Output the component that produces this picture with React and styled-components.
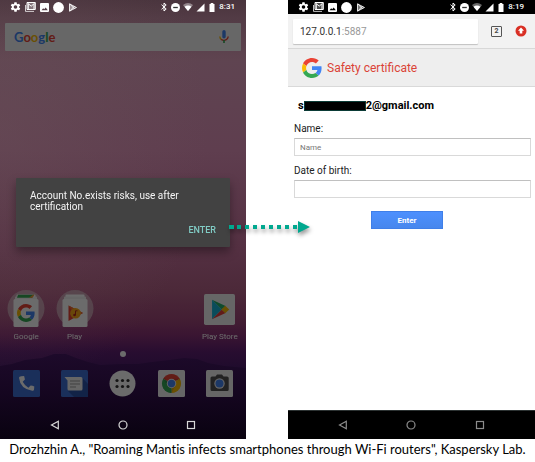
import React from "react";
import styled, { createGlobalStyle } from "styled-components";

const GlobalStyle = createGlobalStyle`
  *, *::before, *::after { box-sizing: border-box; }
  body { margin: 0; background: #fff; font-family: Roboto, sans-serif; }
  svg { display: block; flex: none; }
`;

const Figure = styled.figure`
  margin: 0;
  display: flex;
  flex-direction: column;
`;

const Phones = styled.div`
  display: grid;
  grid-template-columns: 246fr 42fr 247fr;
  min-height: 439px;
`;

const Caption = styled.figcaption`
  padding-top: 1px;
  text-align: center;
  font: 13px/18px Lato, sans-serif;
  font-variant-ligatures: none;
  color: #000;
`;

const Phone = styled.section`
  position: relative;
  display: flex;
  flex-direction: column;
  background: #fff;
`;

const HomePhone = styled(Phone)`
  background:
    radial-gradient(ellipse at 0% 30%, rgba(108, 84, 90, 0.35), transparent 60%),
    linear-gradient(
      #49343d 0, #523b45 18px, #5f4450 60px, #62455300 61px
    ),
    linear-gradient(
      #5f4450 0, #5f4451 60px, #5f3e4f 150px, #543042 250px, #4c2939 290px,
      #431e33 320px, #3a1532 335px, #280d30 352px, #1e0b2c 370px, #12041c 390px
    );
`;

const Ridge = styled.svg`
  position: absolute;
  left: 0;
  bottom: 0;
  width: 100%;
  height: 88px;
`;

const Status = styled.header`
  position: relative;
  display: flex;
  align-items: center;
  justify-content: space-between;
  height: 14px;
  padding: 0 11px 0 10px;
  color: #fff;
  background: ${(p) => (p.$solid ? "#000" : "transparent")};
`;

const IconRun = styled.div`
  display: flex;
  align-items: center;
  gap: 3px;
`;

const Clock = styled.time`
  font-size: 8px;
  line-height: 14px;
  font-weight: 500;
`;

const Launcher = styled.div`
  position: relative;
  flex: 1;
  display: flex;
  flex-direction: column;
  filter: brightness(0.42);
`;

const SearchBar = styled.button`
  display: flex;
  align-items: center;
  justify-content: space-between;
  height: 28px;
  margin: 9px 5px 0;
  padding: 0 12px 0 9px;
  border: 0;
  border-radius: 1px;
  background: #f6f6f6;
`;

const Wordmark = styled.span`
  font: 700 13px/20px Lato, sans-serif;
`;

const Letter = styled.span`
  color: ${(p) => p.$color};
`;

const AppRow = styled.div`
  display: grid;
  grid-template-columns: repeat(5, 1fr);
  padding: 0 2px;
  margin-top: ${(p) => (p.$push ? "auto" : "0")};
`;

const AppButton = styled.button`
  display: flex;
  flex-direction: column;
  align-items: center;
  padding: 0;
  border: 0;
  background: none;
  color: #fff;
  font: 8px/12px Roboto, sans-serif;
  white-space: nowrap;
  grid-column: ${(p) => p.$column || "auto"};
`;

const AppArt = styled.span`
  display: flex;
  align-items: center;
  height: 44px;
`;

const PageDot = styled.span`
  align-self: center;
  width: 6px;
  height: 6px;
  margin: 8px 0 13px;
  border-radius: 50%;
  background: #fff;
`;

const Dock = styled(AppRow)`
  padding-bottom: 13px;
`;

const NavBar = styled.nav`
  position: relative;
  display: grid;
  grid-template-columns: repeat(3, 1fr);
  height: 29px;
  padding: 0 21px;
  color: ${(p) => (p.$solid ? "#8c8c8c" : "#d8d8d8")};
  background: ${(p) => (p.$solid ? "#000" : "transparent")};
  border-top: ${(p) => (p.$solid ? "1px solid #2c3232" : "0")};
`;

const NavButton = styled.button`
  display: flex;
  align-items: center;
  justify-content: center;
  padding: 0;
  border: 0;
  background: none;
  color: inherit;
`;

const Dialog = styled.div`
  position: absolute;
  top: 178px;
  left: 16px;
  right: 16px;
  display: flex;
  flex-direction: column;
  padding: 12px 10px 9px 14px;
  border-radius: 1px;
  background: #424242;
  box-shadow: 0 5px 10px rgba(0, 0, 0, 0.35);
`;

const DialogText = styled.p`
  margin: 0;
  color: #f4f4f4;
  font-size: 10px;
  line-height: 11px;
`;

const DialogAction = styled.button`
  align-self: flex-end;
  margin-top: 10px;
  padding: 0 4px;
  border: 0;
  background: none;
  color: #80cbc4;
  font: 500 9px/16px Roboto, sans-serif;
`;

const Gap = styled.div`
  position: relative;
  z-index: 1;
`;

const Arrow = styled.svg`
  position: absolute;
  top: 220px;
  left: -17px;
  filter: drop-shadow(1px 3px 2px rgba(0, 0, 0, 0.4));
`;

const BrowserBar = styled.div`
  display: flex;
  align-items: center;
  gap: 13px;
  height: 35px;
  padding: 0 8px 0 5px;
  background: #f2f2f2;
  border-bottom: 1px solid #d8d8d8;
`;

const Url = styled.button`
  flex: 1;
  height: 25px;
  padding: 0 7px;
  border: 0;
  border-radius: 1px;
  background: #fff;
  box-shadow: 0 1px 1px rgba(0, 0, 0, 0.2);
  color: #333;
  font: 10px/25px Roboto, sans-serif;
  text-align: left;
`;

const Port = styled.span`
  color: #999;
`;

const BarButton = styled.button`
  display: flex;
  padding: 0;
  border: 0;
  background: none;
`;

const TabCount = styled(BarButton)`
  align-items: center;
  justify-content: center;
  width: 11px;
  height: 11px;
  border: 1px solid #555;
  border-radius: 1px;
  color: #444;
  font: 700 7px/9px Roboto, sans-serif;
`;

const SiteHeader = styled.div`
  display: flex;
  align-items: center;
  gap: 5px;
  height: 38px;
  padding: 0 14px;
  background: #eee;
  border-bottom: 1px solid #d9d9d9;
`;

const SiteTitle = styled.h1`
  margin: 0;
  color: #db4437;
  font: 400 12px/16px Roboto, sans-serif;
`;

const Form = styled.form`
  flex: 1;
  display: flex;
  flex-direction: column;
  padding: 12px 4px 0 6px;
`;

const Email = styled.h2`
  display: flex;
  align-items: center;
  margin: 0 0 8px 4px;
  color: #000;
  font: 700 11px/14px Roboto, sans-serif;
`;

const Redaction = styled.span`
  width: 62px;
  height: 10px;
  background: #000;
  border: 1px solid #0b3b36;
`;

const Label = styled.label`
  color: #222;
  font-size: 10px;
  line-height: 16px;
`;

const TextBox = styled.input`
  width: 100%;
  height: 18px;
  margin: 1px 0 7px;
  padding: 0 5px;
  border: 1px solid #d9d9d9;
  border-top-color: #c0c0c0;
  background: #fff;
  color: #333;
  font: 8px/16px Roboto, sans-serif;
  &::placeholder { color: #777; }
`;

const Submit = styled.button`
  align-self: center;
  width: 72px;
  height: 18px;
  margin: 6px 11px 0 0;
  border: 1px solid #3f7fe8;
  background: linear-gradient(#4d90fe, #4787ed);
  color: #fff;
  font: 700 8px/16px Roboto, sans-serif;
`;

const GoogleG = ({ size }) => (
  <svg width={size} height={size} viewBox="0 0 48 48">
    <path fill="#EA4335" d="M24 9.5c3.54 0 6.71 1.22 9.21 3.6l6.85-6.85C35.9 2.38 30.47 0 24 0 14.62 0 6.51 5.38 2.56 13.22l7.98 6.19C12.43 13.72 17.74 9.5 24 9.5z" />
    <path fill="#4285F4" d="M46.98 24.55c0-1.57-.15-3.09-.38-4.55H24v9.02h12.94c-.58 2.96-2.26 5.48-4.78 7.18l7.73 6c4.51-4.18 7.09-10.36 7.09-17.65z" />
    <path fill="#FBBC05" d="M10.53 28.59c-.48-1.45-.76-2.99-.76-4.59s.27-3.14.76-4.59l-7.98-6.19C.92 16.46 0 20.12 0 24c0 3.88.92 7.54 2.56 10.78l7.97-6.19z" />
    <path fill="#34A853" d="M24 48c6.48 0 11.93-2.13 15.89-5.81l-7.73-6c-2.15 1.45-4.92 2.3-8.16 2.3-6.26 0-11.57-4.22-13.47-9.91l-7.98 6.19C6.51 42.62 14.62 48 24 48z" />
  </svg>
);

function StatusBar({ time, solid }) {
  return (
    <Status $solid={solid}>
      <IconRun>
        <svg width="11" height="10" viewBox="1 2 22 20" fill="currentColor">
          <path d="M19.14 12.94a7 7 0 0 0 .06-.94 7 7 0 0 0-.07-.94l2.03-1.58a.5.5 0 0 0 .12-.61l-1.92-3.32a.49.49 0 0 0-.59-.22l-2.39.96a7 7 0 0 0-1.62-.94l-.36-2.54A.48.48 0 0 0 13.92 2.4h-3.84a.47.47 0 0 0-.47.41l-.36 2.54a7.3 7.3 0 0 0-1.62.94l-2.39-.96a.48.48 0 0 0-.59.22L2.74 8.87a.47.47 0 0 0 .12.61l2.03 1.58a7 7 0 0 0 0 1.88l-2.03 1.58a.5.5 0 0 0-.12.61l1.92 3.32c.12.22.37.29.59.22l2.39-.96c.5.38 1.03.7 1.62.94l.36 2.54c.05.24.24.41.48.41h3.84c.24 0 .44-.17.47-.41l.36-2.54a7 7 0 0 0 1.62-.94l2.39.96c.22.08.47 0 .59-.22l1.92-3.32a.48.48 0 0 0-.12-.61zM12 15.6a3.6 3.6 0 1 1 0-7.2 3.6 3.6 0 0 1 0 7.2z" />
        </svg>
        <svg width="12" height="10" viewBox="0 0 12 10" fill="none" stroke="currentColor">
          <path d="M1.5 3v6.4H10" strokeOpacity=".75" />
          <path d="M3 .5h8.3v7H3z" fill="currentColor" fillOpacity=".3" />
          <path d="M3.5 1l3.7 3.2L10.8 1M4.3 7V2M10 7V2" />
        </svg>
        <svg width="11" height="9" viewBox="0 0 11 9" fill="currentColor">
          <path fillRule="evenodd" d="M2 0h7a1 1 0 0 1 1 1v7a1 1 0 0 1-1 1H2a1 1 0 0 1-1-1V1a1 1 0 0 1 1-1zM2.5 7.2h6.3L6.7 4.4 5.2 6.2 4.2 5.2z" />
        </svg>
        <svg width="11" height="11" viewBox="0 0 11 11" fill="currentColor"><circle cx="5.5" cy="5.5" r="5.4" /></svg>
        <svg width="12" height="9" viewBox="0 0 12 9" fill="currentColor">
          <path fillOpacity=".45" d="M2 .5v8l7.500-4z" />
          <path fill="none" stroke="currentColor" strokeWidth=".8" d="M2.500.8v7.400L9.500 4.500zM3 1l4.500 5M3 8l4.500-5" />
        </svg>
      </IconRun>
      <IconRun>
        <svg width="8" height="10" viewBox="0 0 8 10" fill="none" stroke="currentColor">
          <path d="M1.5 2.700l4.700 4.300L4 9V1l2.200 2L1.500 7.300" />
        </svg>
        <svg width="9" height="9" viewBox="0 0 9 9"><circle cx="4.500" cy="4.500" r="4.500" fill="currentColor" /><path d="M2.200 4.500h4.600" stroke="#333" strokeWidth="1.300" /></svg>
        <svg width="10" height="8" viewBox="0 0 10 8" fill="currentColor">
          <path opacity=".4" d="M5 8L0 2q5-4 10 0z" /><path d="M5 8L1.500 3.700q3.500-2.600 7 0z" />
        </svg>
        <svg width="9" height="9" viewBox="0 0 9 9" fill="currentColor"><path d="M8.500.5v8H.5z" /></svg>
        <svg width="8" height="9" viewBox="0 0 8 9" fill="currentColor"><path d="M2.700 0h2.600v1h1.200v8h-5V1h1.200z" /></svg>
        <Clock>{time}</Clock>
      </IconRun>
    </Status>
  );
}

function Navigation({ solid }) {
  return (
    <NavBar $solid={solid}>
      <NavButton aria-label="Back">
        <svg width="10" height="10" viewBox="0 0 10 10" fill="none" stroke="currentColor" strokeWidth="1.200"><path d="M8.300 1.200v7.600L1.500 5z" /></svg>
      </NavButton>
      <NavButton aria-label="Home">
        <svg width="10" height="10" viewBox="0 0 10 10" fill="none" stroke="currentColor" strokeWidth="1.200"><circle cx="5" cy="5" r="4" /></svg>
      </NavButton>
      <NavButton aria-label="Overview">
        <svg width="10" height="10" viewBox="0 0 10 10" fill="none" stroke="currentColor" strokeWidth="1.200"><rect x="1.500" y="1.500" width="7" height="7" /></svg>
      </NavButton>
    </NavBar>
  );
}

const Folder = ({ children }) => (
  <svg width="38" height="38" viewBox="0 0 38 38">
    <circle cx="19" cy="18.500" r="18.500" fill="#d9b9c6" fillOpacity=".75" />
    <rect x="9.500" y="4.500" width="19" height="18" rx="1" fill="#fff" />
    <rect x="8" y="6.500" width="22" height="18" rx="1" fill="#f4f4f4" />
    <rect x="6.500" y="9" width="25" height="28" rx="1.500" fill="#fff" />
    {children}
  </svg>
);

const Tile = ({ size = 27, color = "#f4f4f4", children }) => (
  <svg width={size} height={size} viewBox="0 0 27 27">
    <rect width="27" height="27" rx="1.500" fill={color} />
    {children}
  </svg>
);

const GOOGLE = [["G", "#4285f4"], ["o", "#ea4335"], ["o", "#fbbc05"], ["g", "#4285f4"], ["l", "#34a853"], ["e", "#ea4335"]];

function HomeScreen() {
  return (
    <HomePhone>
      <Ridge viewBox="0 0 246 88" preserveAspectRatio="none">
        <defs>
          <linearGradient id="ground" x1="0" y1="0" x2="0" y2="1">
            <stop offset="0" stopColor="#1d0a2a" />
            <stop offset=".45" stopColor="#150620" />
            <stop offset="1" stopColor="#090210" />
          </linearGradient>
        </defs>
        <path fill="url(#ground)" d="M0 15L12 13 25 9 42 7 54 3 66 3 76 7 88 11 100 14 122 13 138 13 152 11 170 9 184 7 197 8 208 12 224 15 246 17V88H0z" />
      </Ridge>
      <StatusBar time="8:31" />
      <Launcher>
        <SearchBar aria-label="Google search">
          <Wordmark>{GOOGLE.map(([c, color], i) => <Letter key={i} $color={color}>{c}</Letter>)}</Wordmark>
          <svg width="10" height="14" viewBox="0 0 10 14" fill="none">
            <rect x="3.300" y="0" width="3.400" height="8.500" rx="1.700" fill="#4285f4" />
            <path d="M.8 6.500q.2 2 1.500 3" stroke="#fbbc05" strokeWidth="1.400" />
            <path d="M2.200 9.400q2.800 2 5.400 0Q9 8.400 9.200 6.500" stroke="#ea4335" strokeWidth="1.400" />
            <path d="M5 10v3" stroke="#34a853" strokeWidth="1.600" />
          </svg>
        </SearchBar>
        <AppRow $push>
          <AppButton>
            <AppArt>
              <Folder>
                <path d="M11 4.700h16l-2 3H10z" fill="#34a853" /><path d="M22 7.700l4-3h1.500l-2 3z" fill="#f29b38" />
                <svg x="10" y="14" width="18" height="18"><GoogleG size={18} /></svg>
              </Folder>
            </AppArt>
            Google
          </AppButton>
          <AppButton>
            <AppArt>
              <Folder>
                <path d="M12.500 15.500v15.500L27 23z" fill="#ea4335" />
                <path d="M12.500 15.500L27 23l-7 3z" fill="#f4702f" />
                <circle cx="19.500" cy="23.200" r="5.300" fill="#fba919" />
                <path d="M19.500 25.200v-4.400h2" stroke="#b3261e" fill="none" /><circle cx="18.500" cy="25" r="1.300" fill="#b3261e" />
              </Folder>
            </AppArt>
            Play
          </AppButton>
          <AppButton $column="5">
            <AppArt>
              <Tile size={31}>
                <path d="M7 5v17l8.500-8.500z" fill="#18b5d8" />
                <path d="M7 5l8.500 8.500 3.300-3z" fill="#23b26b" />
                <path d="M7 22l8.500-8.500 3.300 3z" fill="#e8413c" />
                <path d="M18.500 10.300l3.500 3.200-3.500 3.200-3.300-3.200z" fill="#fbbc05" />
              </Tile>
            </AppArt>
            Play Store
          </AppButton>
        </AppRow>
        <PageDot />
        <Dock>
          <AppButton aria-label="Phone">
            <Tile color="#3d70d6">
              <path fill="#fff" d="M8.200 6.200l2.900-.3q.6 2 .8 3.700L9.700 11.800q2.100 4 5.700 5.900l2.200-2.100q1.900.2 3.700.9l-.3 3.300q-.2 1.300-1.800 1Q7.200 18.800 6 7.700 6 6.300 8.200 6.200z" />
            </Tile>
          </AppButton>
          <AppButton aria-label="Messages">
            <Tile color="#3d70d6">
              <path d="M21.500 8L27 14v13H13l-6-6z" fill="#2c54a8" />
              <path d="M3.500 7h16.500q1.500 0 1.500 1.500v10.500q0 1.500-1.500 1.500H8q-1.500 0-1.500-1.500V10.500z" fill="#f4f4f4" />
              <path d="M9 11h10M9 14h10M9 17h6" stroke="#999" />
            </Tile>
          </AppButton>
          <AppButton aria-label="All apps">
            <svg width="27" height="27" viewBox="0 0 27 27">
              <circle cx="13.500" cy="13.500" r="13" fill="#fff" />
              {[8, 13.5, 19].map((x) => [10.5, 16.5].map((y) => <circle key={`${x}-${y}`} cx={x} cy={y} r="1.600" fill="#333" />))}
            </svg>
          </AppButton>
          <AppButton aria-label="Chrome">
            <Tile>
              <path d="M13.500 13.500L5.200 8.700A9.600 9.600 0 0 1 21.800 8.700z" fill="#ea4335" />
              <path d="M13.500 13.500L21.800 8.700A9.600 9.600 0 0 1 13.500 23.100z" fill="#fbbc05" />
              <path d="M13.500 13.500V23.100A9.600 9.600 0 0 1 5.200 8.700z" fill="#34a853" />
              <path d="M13.500 8.700h8.300l.7 1.600h-9zM17.500 16L13.500 23.100h-1.500l2-7.100zM9.500 16L5.200 8.700l1.200-1.500 4 5z" fill="#000" fillOpacity=".12" />
              <circle cx="13.500" cy="13.500" r="4.700" fill="#eee" /><circle cx="13.500" cy="13.500" r="3.700" fill="#4285f4" />
            </Tile>
          </AppButton>
          <AppButton aria-label="Camera">
            <Tile>
              <path d="M6 6.500h3.500l1.500-2h5l1.500 2H21q1.700 0 1.700 1.500v11.500q0 1.500-1.500 1.500H6q-1.500 0-1.500-1.500V8q0-1.500 1.500-1.500z" fill="#505050" />
              <circle cx="13.500" cy="13.500" r="5.200" fill="#eee" /><circle cx="13.500" cy="13.500" r="4" fill="#4285f4" />
            </Tile>
          </AppButton>
        </Dock>
      </Launcher>
      <Navigation />
      <Dialog role="dialog" aria-labelledby="alert">
        <DialogText id="alert">Account No.exists risks, use after certification</DialogText>
        <DialogAction>ENTER</DialogAction>
      </Dialog>
    </HomePhone>
  );
}

function CertificatePage() {
  return (
    <Phone>
      <StatusBar time="8:19" solid />
      <BrowserBar>
        <Url>127.0.0.1<Port>:5887</Port></Url>
        <TabCount aria-label="2 tabs">2</TabCount>
        <BarButton aria-label="Update available">
          <svg width="12" height="12" viewBox="0 0 12 12"><circle cx="6" cy="6" r="5.500" fill="#d93025" /><path d="M6 2.600l3 3.200H7.300v2.700H4.700V5.800H3z" fill="#fff" /></svg>
        </BarButton>
      </BrowserBar>
      <SiteHeader>
        <GoogleG size={20} />
        <SiteTitle>Safety certificate</SiteTitle>
      </SiteHeader>
      <Form onSubmit={(e) => e.preventDefault()}>
        <Email>s<Redaction />2@gmail.com</Email>
        <Label htmlFor="name">Name:</Label>
        <TextBox id="name" placeholder="Name" />
        <Label htmlFor="birth">Date of birth:</Label>
        <TextBox id="birth" />
        <Submit>Enter</Submit>
      </Form>
      <Navigation solid />
    </Phone>
  );
}

export default function App() {
  return (
    <>
      <GlobalStyle />
      <Figure>
        <Phones>
          <HomeScreen />
          <Gap>
            <Arrow width="82" height="14" viewBox="0 0 82 14">
              <path d="M0 7h70" stroke="#00a88f" strokeWidth="4" strokeDasharray="5 3 4 4 4 4 4 4 4 4 4 4 4 4 4 4 4 4" />
              <path d="M69 1l12 6-12 6z" fill="#00a88f" />
            </Arrow>
          </Gap>
          <CertificatePage />
        </Phones>
        <Caption>Drozhzhin A., "Roaming Mantis infects smartphones through Wi-Fi routers", Kaspersky Lab.</Caption>
      </Figure>
    </>
  );
}
